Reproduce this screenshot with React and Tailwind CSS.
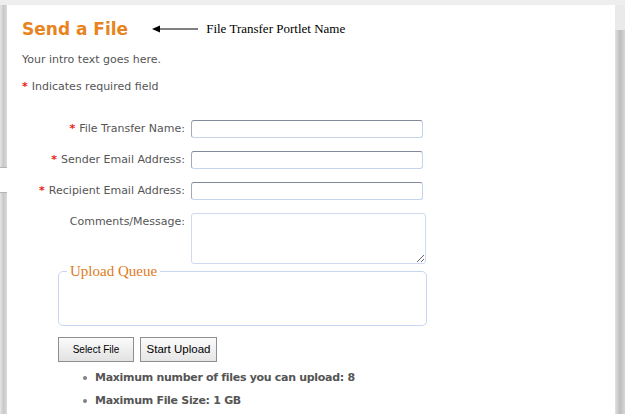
export default function App() {
  const label = "text-right text-[11px] leading-[14px] text-[#555] pt-[2px]";
  const star = "text-[#e8221b] font-bold mr-[4px]";
  const input =
    "w-[232px] h-[18px] bg-white rounded-[3px] border border-[#c6d3ec] border-t-[#838a9c] border-l-[#a3a9b8]";

  return (
    <div className="flex h-[414px] w-[625px] overflow-hidden bg-[#eeeeee] pt-[5px] font-['DejaVu_Sans',Verdana,sans-serif]">
      {/* left edge */}
      <div className="flex w-[7px] flex-col">
        <div className="h-[162px] bg-gradient-to-r from-[#e6e6e6] via-[#c9c9c9] to-[#dadada]" />
        <div className="h-[26px] border-y border-[#b5b5b5] bg-white" />
        <div className="flex-1 bg-gradient-to-r from-[#e6e6e6] via-[#c9c9c9] to-[#dadada]" />
      </div>

      {/* portlet body */}
      <div className="flex-1 bg-white pl-[15px] pt-[12px]">
        <div className="flex items-center">
          <h1 className="text-[17px] font-bold leading-[24px] text-[#e8841f]">Send a File</h1>
          <div className="ml-[24px] flex items-center">
            <svg width="46" height="8" viewBox="0 0 46 8">
              <path d="M0 4 L8 0.5 L8 7.5 Z" fill="#000" />
              <line x1="7" y1="4" x2="46" y2="4" stroke="#000" strokeWidth="1" />
            </svg>
            <span className="ml-[8px] font-['Liberation_Serif',serif] text-[13px] text-black">
              File Transfer Portlet Name
            </span>
          </div>
        </div>

        <p className="mt-[12px] text-[11px] leading-[14px] text-[#555]">Your intro text goes here.</p>
        <p className="mt-[13px] text-[11px] leading-[14px] text-[#555]">
          <span className={star}>*</span>Indicates required field
        </p>

        <div className="mt-[26px] grid grid-cols-[163px_auto] gap-x-[6px] gap-y-[13px]">
          <label className={label}>
            <span className={star}>*</span>File Transfer Name:
          </label>
          <input className={input} />
          <label className={label}>
            <span className={star}>*</span>Sender Email Address:
          </label>
          <input className={input} />
          <label className={label}>
            <span className={star}>*</span>Recipient Email Address:
          </label>
          <input className={input} />
          <label className={label}>Comments/Message:</label>
          <textarea className="h-[51px] w-[235px] rounded-[3px] border border-[#cfdaf0] bg-white" />
        </div>

        <fieldset className="ml-[36px] mt-[-1px] h-[63px] w-[369px] rounded-[5px] border border-[#c8d6f2]">
          <legend className="ml-[8px] px-[3px] font-['Liberation_Serif',serif] text-[15px] leading-[16px] text-[#e07a25]">
            Upload Queue
          </legend>
        </fieldset>

        <div className="ml-[36px] mt-[11px] flex gap-[6px]">
          <button className="h-[25px] w-[76px] border border-[#8e8e8e] bg-gradient-to-b from-[#fbfbfb] to-[#e2e2e2] font-['Liberation_Sans',Arial,sans-serif] text-[10px] text-black">
            Select File
          </button>
          <button className="h-[25px] w-[77px] border border-[#8e8e8e] bg-gradient-to-b from-[#fbfbfb] to-[#e6e6e6] font-['Liberation_Sans',Arial,sans-serif] text-[11.5px] text-black">
            Start Upload
          </button>
        </div>

        <ul className="ml-[61px] mt-[4px] text-[11px] font-bold leading-[23px] tracking-[-0.3px] text-[#555]">
          {["Maximum number of files you can upload: 8", "Maximum File Size: 1 GB"].map((t) => (
            <li key={t} className="flex items-center">
              <span className="mr-[8px] h-[4px] w-[4px] rounded-full bg-[#808080]" />
              {t}
            </li>
          ))}
        </ul>
      </div>

      {/* right edge */}
      <div className="flex w-[10px] flex-col">
        <div className="h-[25px] bg-[#eaeaea]" />
        <div className="flex-1 bg-gradient-to-r from-[#e2e2e2] via-[#bdbdbd] to-[#d6d6d6]" />
      </div>
    </div>
  );
}
